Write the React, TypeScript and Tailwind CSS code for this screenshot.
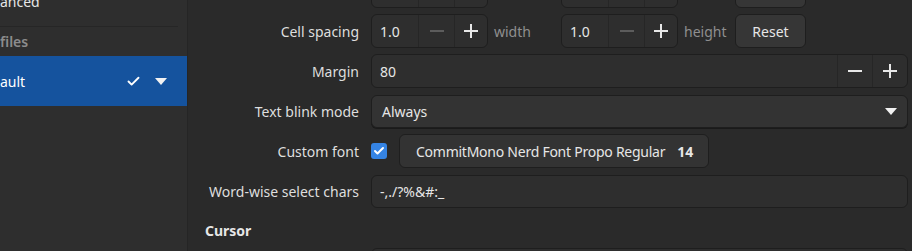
import { Check } from "lucide-react";

function Minus({ dim }: { dim?: boolean }) {
  return (
    <svg width="14" height="14" viewBox="0 0 14 14" className={dim ? "text-[#5c5c5c]" : "text-[#e8e8e8]"}>
      <rect x="0" y="6" width="14" height="2" fill="currentColor" />
    </svg>
  );
}

function Plus() {
  return (
    <svg width="14" height="14" viewBox="0 0 14 14" className="text-[#e8e8e8]">
      <rect x="0" y="6" width="14" height="2" fill="currentColor" />
      <rect x="6" y="0" width="2" height="14" fill="currentColor" />
    </svg>
  );
}

function Caret() {
  return (
    <svg width="12" height="7" viewBox="0 0 12 7">
      <path d="M0 0 H12 L6 7 Z" fill="#f2f2f2" />
    </svg>
  );
}

function SpinSmall({ value }: { value?: string }) {
  return (
    <div className="flex h-[34px] w-[117px] rounded-[6px] border border-[#1e1e1e] bg-[#2e2e2e]">
      <div className="flex w-[46px] items-center pl-[8px] text-[#e6e6e6]">{value}</div>
      <div className="flex w-[36px] items-center justify-center border-l border-[#262626]">
        <Minus dim />
      </div>
      <div className="flex flex-1 items-center justify-center border-l border-[#262626]">
        <Plus />
      </div>
    </div>
  );
}

function Row({ label, children }: { label?: string; children: React.ReactNode }) {
  return (
    <div className="flex h-[34px] items-center">
      <div className="w-[166px] shrink-0 pr-[12px] text-right text-[#dedede]">{label}</div>
      <div className="flex flex-1 items-center">{children}</div>
    </div>
  );
}

function SpacingRow({ label, clipped }: { label?: string; clipped?: boolean }) {
  return (
    <Row label={label}>
      <SpinSmall value={clipped ? undefined : "1.0"} />
      <span className="ml-[6px] w-[67px] text-[#8f8f8f]">{clipped ? "" : "width"}</span>
      <SpinSmall value={clipped ? undefined : "1.0"} />
      <span className="ml-[6px] w-[53px] text-[#8f8f8f]">{clipped ? "" : "height"}</span>
      <button className="ml-[-2px] h-[34px] w-[71px] rounded-[6px] border border-[#1e1e1e] bg-[#363636] text-[#e6e6e6]">
        {clipped ? "" : "Reset"}
      </button>
    </Row>
  );
}

export default function App() {
  return (
    <div className="flex h-[251px] w-[912px] overflow-hidden bg-[#2a2a2a] font-['Noto_Sans',sans-serif] text-[14px]">
      {/* Sidebar */}
      <div className="w-[187px] shrink-0 bg-[#2e2e2e]">
        <div className="mt-[-8px] h-[35px] w-[178px] border-b border-[#262626] leading-[20px] text-[#e6e6e6]">
          anced
        </div>
        <div className="flex h-[22px] items-center pt-[6px] font-semibold text-[#8c8c8c]">files</div>
        <div className="h-[7px]" />
        <div className="flex h-[50px] items-center bg-[#15539e] text-white">
          <span className="flex-1">ault</span>
          <Check className="mr-[14px] h-[15px] w-[15px]" strokeWidth={3} />
          <span className="mr-[20px]">
            <Caret />
          </span>
        </div>
      </div>
      <div className="w-px shrink-0 bg-[#252525]" />

      {/* Main */}
      <div className="flex flex-1 flex-col pl-[17px] pr-[4px]">
        <div className="mt-[-26px] flex flex-col gap-[6px]">
          <SpacingRow clipped />
          <SpacingRow label="Cell spacing" />
          <Row label="Margin">
            <div className="flex h-[34px] flex-1 rounded-[6px] border border-[#1e1e1e] bg-[#2e2e2e]">
              <div className="flex flex-1 items-center pl-[8px] text-[#e6e6e6]">80</div>
              <div className="flex w-[35px] items-center justify-center border-l border-[#262626]">
                <Minus />
              </div>
              <div className="flex w-[35px] items-center justify-center border-l border-[#262626]">
                <Plus />
              </div>
            </div>
          </Row>
          <Row label="Text blink mode">
            <div className="flex h-[33px] flex-1 items-center rounded-[6px] border border-[#1e1e1e] bg-[#333333] px-[10px] text-[#e6e6e6] shadow-[0_1px_0_#1a1a1a]">
              <span className="flex-1">Always</span>
              <Caret />
            </div>
          </Row>
          <Row label="Custom font">
            <div className="flex h-[16px] w-[16px] items-center justify-center rounded-[3px] bg-[#3584e4]">
              <Check className="h-[12px] w-[12px] text-white" strokeWidth={4} />
            </div>
            <button className="ml-[12px] flex h-[34px] w-[310px] items-center rounded-[6px] border border-[#1e1e1e] bg-[#333333] pl-[16px] text-[#e6e6e6]">
              <span className="tracking-[-0.25px]">CommitMono Nerd Font Propo Regular</span>
              <span className="ml-[12px] font-bold">14</span>
            </button>
          </Row>
          <Row label="Word-wise select chars">
            <div className="flex h-[33px] flex-1 items-center rounded-[6px] border border-[#1e1e1e] bg-[#2e2e2e] pl-[8px] text-[#e6e6e6]">
              -,./?%&amp;#:_
            </div>
          </Row>
        </div>
        <div className="mt-[12px] h-[24px] font-bold text-[#e6e6e6]">Cursor</div>
        <div className="mt-[7px] flex">
          <div className="w-[166px] shrink-0" />
          <div className="h-[34px] flex-1 rounded-[6px] border border-[#1e1e1e] bg-[#2e2e2e]" />
        </div>
      </div>
    </div>
  );
}
